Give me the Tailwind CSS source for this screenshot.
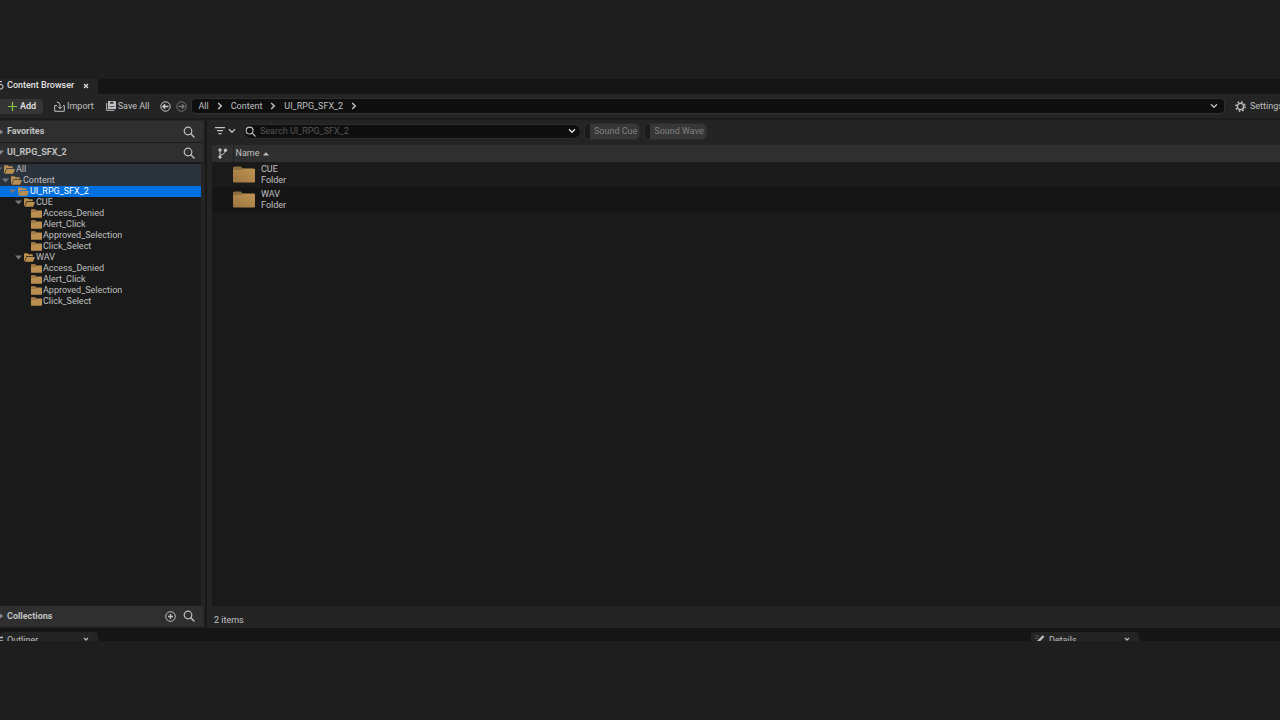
<!DOCTYPE html>
<html lang="en">
<head>
  <meta charset="UTF-8" />
  <meta name="viewport" content="width=device-width, initial-scale=1" />
  <title>Content Browser</title>
  <script src="https://cdn.jsdelivr.net/npm/@tailwindcss/browser@4"></script>
</head>
<body class="bg-[#1e1e1e] h-screen overflow-hidden py-[79px] font-['Roboto',sans-serif] text-[9px] leading-[11px] text-[#c0c0c0]">

  <!-- shared icons -->
  <svg class="absolute w-0 h-0">
    <symbol id="search" viewBox="0 0 12 12"><circle cx="5" cy="5" r="3.8" fill="none" stroke="currentColor" stroke-width="1.2"/><path d="M7.8 7.8 11 11" stroke="currentColor" stroke-width="1.4" stroke-linecap="round"/></symbol>
    <symbol id="close" viewBox="0 0 6 6"><path d="M1 1l4 4M5 1 1 5" stroke="currentColor" stroke-width="1.2"/></symbol>
    <symbol id="down" viewBox="0 0 8 6"><path d="M1 1.3l3 3 3-3" fill="none" stroke="currentColor" stroke-width="1.3"/></symbol>
    <symbol id="right" viewBox="0 0 6 8"><path d="M1.2 1l3 3-3 3" fill="none" stroke="currentColor" stroke-width="1.5"/></symbol>
    <symbol id="expanded" viewBox="0 0 7 5"><path d="M0 .5h7L3.5 4.5z" fill="currentColor"/></symbol>
    <symbol id="collapsed" viewBox="0 0 4 6"><path d="M0 .5 3.2 3 0 5.5z" fill="currentColor"/></symbol>
    <symbol id="folder" viewBox="0 0 11 9"><path d="M0 .8q0-.6.600-.6h3.600l.8 1.200h5.400q.6 0 .6.600v6.200q0 .6-.6.600H.6q-.6 0-.6-.6z" fill="#bb8f4f"/><path d="M0 2.100h5" stroke="#6e5430" stroke-width=".7"/></symbol>
    <symbol id="folder-open" viewBox="0 0 11 9"><path d="M0 1q0-.8.800-.8h2.700l1 1.100H8q.8 0 .8.800v1.100H2.400L.5 8Q0 8 0 7.400z" fill="#bb8f4f"/><path d="M2.800 3.900H11L9.300 8.200q-.2.500-.7.500H.8z" fill="#bb8f4f"/></symbol>
    <symbol id="folder-large" viewBox="0 0 22 17"><path d="M0 2q0-1.500 1.500-1.500h6.300L9.500 2.500H20.500Q22 2.500 22 4v4H0z" fill="#8d6c40"/><path d="M0 5q0-1 1-1h7l1.700-1.300H21q1 0 1 1V15.500q0 1-1 1H1q-1 0-1-1z" fill="url(#tan)"/></symbol>
    <linearGradient id="tan" x1="0" y1="1" x2="1" y2="0"><stop stop-color="#9c7540"/><stop offset="1" stop-color="#bf9454"/></linearGradient>
  </svg>

  <div class="h-full flex flex-col overflow-hidden bg-[#242424]">

    <!-- tab strip -->
    <div class="h-[15px] shrink-0 flex bg-[#151515]">
      <div class="w-[98px] flex items-center pb-[2px] bg-[#242424] text-[#e0e0e0] font-medium">
        <svg class="w-[4px] h-[9px] mr-[3px]" viewBox="5 0 4 9"><path d="M4 .7h3M5 3.500h1q2 0 2 2.200T6 8H5" fill="none" stroke="currentColor"/></svg>
        <span class="flex-1">Content Browser</span>
        <button aria-label="Close Content Browser" class="mr-[9px]"><svg class="w-[6px] h-[6px]"><use href="#close"/></svg></button>
      </div>
    </div>

    <!-- toolbar -->
    <div class="h-6 shrink-0 flex items-center whitespace-nowrap overflow-hidden">
      <button class="w-[43px] h-[15px] shrink-0 flex items-center gap-[3px] pl-2 rounded-r-sm bg-[#353535] text-[#e6e6e6] font-medium">
        <svg class="w-[9px] h-[9px]" viewBox="0 0 9 9"><path d="M4.500 0v9M0 4.500h9" stroke="#86c440" stroke-width="1.200"/></svg>Add
      </button>
      <button class="flex items-center gap-[2px] ml-[11px] shrink-0">
        <svg class="w-[11px] h-[11px]" viewBox="0 0 11 11" fill="none" stroke="currentColor"><path d="M3 4.500H.7v5.800h9.600V4.500H9"/><path d="M2.800 1q3.200 0 3.200 3.200V7.500M3.800 5.600 6 7.800l2.200-2.200"/></svg>Import
      </button>
      <button class="flex items-center gap-[2px] ml-3 shrink-0">
        <svg class="w-[10px] h-[10px]" viewBox="0 0 10 10"><path d="M.7 2v7.300h7.800" fill="none" stroke="currentColor"/><path d="M2 0h7.200l.8.800V8H2z" fill="currentColor"/><path d="M4 .8h3.500v2H4zM3.500 5h5v.8h-5z" fill="#3a3a3a"/></svg>Save All
      </button>
      <button aria-label="Back" class="ml-[11px] shrink-0 text-[#d0d0d0]"><svg class="w-[11px] h-[11px] block" viewBox="0 0 11 11" fill="none" stroke="currentColor"><circle cx="5.500" cy="5.500" r="4.700"/><path d="M8.500 5.500H3M5.200 3.200 2.900 5.500l2.300 2.300" stroke-width="1.300"/></svg></button>
      <button aria-label="Forward" class="ml-[5px] shrink-0 text-[#777]"><svg class="w-[11px] h-[11px] block" viewBox="0 0 11 11" fill="none" stroke="currentColor"><circle cx="5.500" cy="5.500" r="4.700"/><path d="M2.500 5.500H8M5.800 3.200l2.300 2.300-2.300 2.300" stroke-width="1.300"/></svg></button>
      <nav class="flex-1 h-4 ml-1 flex items-center gap-2 px-[6px] rounded-sm bg-[#0f0f0f] border border-[#303030]">
        <a href="#">All</a>
        <svg class="w-[6px] h-[8px]"><use href="#right"/></svg>
        <a href="#">Content</a>
        <svg class="w-[6px] h-[8px]"><use href="#right"/></svg>
        <a href="#">UI_RPG_SFX_2</a>
        <svg class="w-[6px] h-[8px]"><use href="#right"/></svg>
        <button aria-label="Path history" class="ml-auto"><svg class="w-[8px] h-[6px]"><use href="#down"/></svg></button>
      </nav>
      <button class="w-[55px] pl-[10px] shrink-0 flex items-center gap-1">
        <svg class="w-[11px] h-[11px] shrink-0" viewBox="0 0 11 11" fill="none" stroke="currentColor"><circle cx="5.500" cy="5.500" r="3.100" stroke-width="1.300"/><circle cx="5.500" cy="5.500" r="4.600" stroke-width="1.500" stroke-dasharray="1.700 1.913"/></svg>Settings
      </button>
    </div>

    <div class="flex-1 min-h-0 flex border-t-2 border-[#1c1c1c]">

      <!-- sources panel -->
      <aside class="w-[203px] shrink-0 flex flex-col pb-[2px]">
        <div class="h-[22px] shrink-0 flex items-center pr-2 mt-px bg-[#2f2f2f] border-b border-[#1a1a1a]">
          <svg class="w-[4px] h-[6px] mr-[3px] text-[#888]"><use href="#collapsed"/></svg>
          <h2 class="flex-1 font-bold">Favorites</h2>
          <button aria-label="Search favorites"><svg class="w-[12px] h-[12px] block"><use href="#search"/></svg></button>
        </div>
        <div class="h-5 shrink-0 flex items-center pr-2 bg-[#2f2f2f] border-b border-[#1a1a1a]">
          <svg class="w-[4px] h-[5px] mr-[3px] text-[#888]" viewBox="3 0 4 5"><path d="M0 .5h7L3.500 4.500z" fill="currentColor"/></svg>
          <h2 class="flex-1 font-bold">UI_RPG_SFX_2</h2>
          <button aria-label="Search sources"><svg class="w-[12px] h-[12px] block"><use href="#search"/></svg></button>
        </div>
        <ul id="tree" class="flex-1 min-h-0 overflow-hidden bg-[#1a1a1a] mr-[2px] pt-px"></ul>
        <div class="h-5 shrink-0 flex items-center pr-2 bg-[#2f2f2f]">
          <svg class="w-[4px] h-[6px] mr-[3px] text-[#888]"><use href="#collapsed"/></svg>
          <h2 class="flex-1 font-bold">Collections</h2>
          <button aria-label="Add collection" class="mr-[7px]"><svg class="w-[11px] h-[11px] block" viewBox="0 0 11 11" fill="none" stroke="currentColor"><circle cx="5.500" cy="5.500" r="4.800"/><path d="M5.500 3v5M3 5.500h5" stroke-width="1.300"/></svg></button>
          <button aria-label="Search collections"><svg class="w-[12px] h-[12px] block"><use href="#search"/></svg></button>
        </div>
      </aside>

      <!-- asset view -->
      <main class="flex-1 min-w-0 flex flex-col ml-[2px] pl-[5px] border-l-2 border-[#181818]">
        <div class="h-[25px] shrink-0 flex items-center pb-[3px]">
          <button aria-label="Filters" class="flex items-center gap-[3px] ml-[3px]">
            <svg class="w-[10px] h-[8px]" viewBox="0 0 10 8"><path d="M0 .7h10M2 3.700h6M3.500 6.700h3" stroke="currentColor" stroke-width="1.200"/></svg>
            <svg class="w-[8px] h-[6px]"><use href="#down"/></svg>
          </button>
          <label class="w-[338px] h-[15px] flex items-center ml-[7px] pl-px pr-1 rounded-full bg-[#0f0f0f] border border-[#2c2c2c]">
            <svg class="w-[11px] h-[11px] mr-1"><use href="#search"/></svg>
            <input type="text" aria-label="Search assets" placeholder="Search UI_RPG_SFX_2" class="flex-1 min-w-0 outline-none placeholder:text-[#555]" />
            <svg class="w-[8px] h-[6px] text-[#e0e0e0]"><use href="#down"/></svg>
          </label>
          <button class="h-[15px] ml-1 pl-1 pr-[2px] border-l-[5px] border-[#1b1b1b] rounded-sm bg-[#373737] text-[#808080] outline outline-[#2c2c2c]">Sound Cue</button>
          <button class="h-[15px] ml-[6px] pl-1 pr-[2px] border-l-[5px] border-[#1b1b1b] rounded-sm bg-[#373737] text-[#808080] outline outline-[#2c2c2c]">Sound Wave</button>
        </div>
        <div class="flex-1 min-h-0 bg-[#1a1a1a]">
          <table class="w-full table-fixed border-collapse">
            <thead class="bg-[#2f2f2f] text-left">
              <tr class="h-[17px]">
                <th class="w-[21px] p-0 pl-[5px] border-r border-[#222]" aria-label="Revision control">
                  <svg class="w-[11px] h-[11px] block" viewBox="0 0 11 11"><path d="M3 2v7M3 7q5-.3 5-4.500" fill="none" stroke="currentColor"/><g fill="currentColor"><circle cx="3" cy="2" r="1.700"/><circle cx="3" cy="9" r="1.700"/><circle cx="8.500" cy="2.300" r="1.700"/></g></svg>
                </th>
                <th class="p-0 pl-[2px] font-normal"><button class="flex items-center gap-1">Name <svg class="w-[6px] h-[4px]" viewBox="0 0 6 4"><path d="M0 3.500 3 .3l3 3.200z" fill="currentColor"/></svg></button></th>
              </tr>
            </thead>
            <tbody id="assets"></tbody>
          </table>
        </div>
        <div class="h-[22px] shrink-0 flex items-center pl-[2px] pt-[6px]">2 items</div>
      </main>
    </div>

    <!-- lower dock tabs, cut off by the window edge -->
    <div class="h-[13px] shrink-0 flex overflow-hidden bg-[#151515] pt-1">
      <div class="w-[98px] h-4 flex items-center rounded-t-sm bg-[#242424]">
        <svg class="w-[3px] h-[9px] mr-1" viewBox="0 0 3 9"><path d="M0 1.500h3M0 5h3M0 8h3" stroke="currentColor" stroke-width="1.500"/></svg>
        <span class="flex-1">Outliner</span>
        <button aria-label="Close Outliner" class="mr-[9px]"><svg class="w-[6px] h-[6px]"><use href="#close"/></svg></button>
      </div>
      <div class="w-[108px] h-4 flex items-center ml-auto mr-[141px] rounded-t-sm bg-[#242424]">
        <svg class="w-[10px] h-[10px] ml-1 mr-1" viewBox="0 0 10 10"><path d="M0 1h4M0 3.500h3" stroke="#666" stroke-width=".8"/><path d="M8.500 1 2 7.800" stroke="currentColor" stroke-width="2.400"/></svg>
        <span class="flex-1">Details</span>
        <button aria-label="Close Details" class="mr-[9px]"><svg class="w-[6px] h-[6px]"><use href="#close"/></svg></button>
      </div>
    </div>
  </div>

  <script>
    const sounds = ["Access_Denied", "Alert_Click", "Approved_Selection", "Click_Select"];
    const rows = [
      { name: "All", indent: 0, open: true, style: "bg-[#2b333c]" },
      { name: "Content", indent: 7, open: true, style: "bg-[#2b333c]" },
      { name: "UI_RPG_SFX_2", indent: 14, open: true, style: "bg-[#0070e0] text-white" },
      { name: "CUE", indent: 20, open: true },
      ...sounds.map(name => ({ name, indent: 27 })),
      { name: "WAV", indent: 20, open: true },
      ...sounds.map(name => ({ name, indent: 27 }))
    ];

    document.getElementById("tree").innerHTML = rows.map(r => `
      <li class="${r.style || ""}">
        <button class="w-full h-[11px] flex items-center" style="padding-left: ${r.indent}px">
          <svg class="w-[7px] h-[5px] -ml-[5px] mr-[2px] shrink-0 text-[#777]">${r.open ? '<use href="#expanded"/>' : ""}</svg>
          <svg class="w-[11px] h-[9px] mr-px shrink-0"><use href="#${r.open ? "folder-open" : "folder"}"/></svg>
          ${r.name}
        </button>
      </li>`).join("");

    document.getElementById("assets").innerHTML = ["CUE", "WAV"].map(name => `
      <tr class="h-[25px] even:bg-[#151515]">
        <td class="p-0"></td>
        <td class="p-0">
          <div class="flex items-center gap-[6px]">
            <svg class="w-[22px] h-[17px]"><use href="#folder-large"/></svg>
            <div><div>${name}</div><div>Folder</div></div>
          </div>
        </td>
      </tr>`).join("");
  </script>
</body>
</html>
